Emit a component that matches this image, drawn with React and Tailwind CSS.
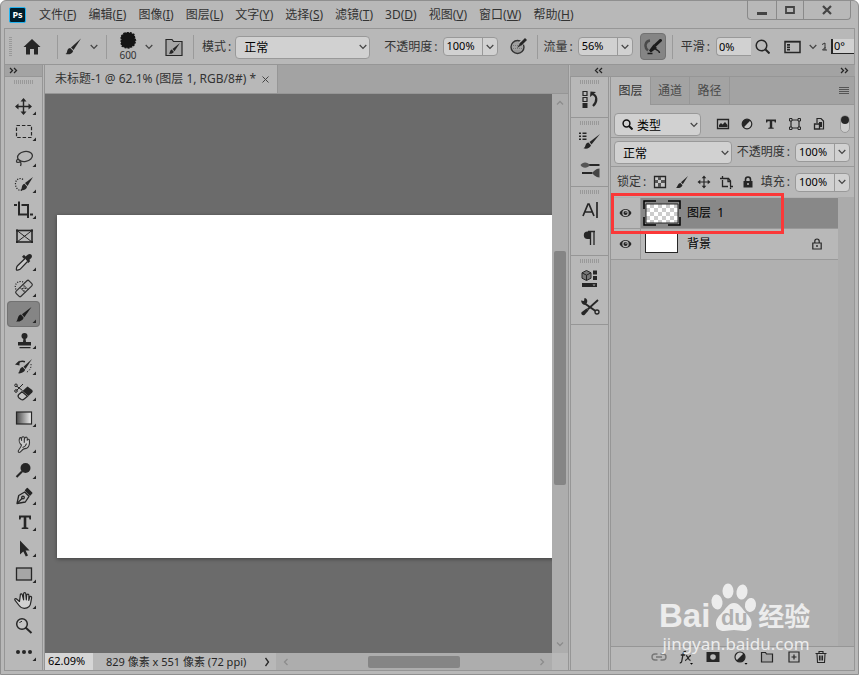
import { useState } from 'react'

const MENUS = [
  ['文件', 'F'],
  ['编辑', 'E'],
  ['图像', 'I'],
  ['图层', 'L'],
  ['文字', 'Y'],
  ['选择', 'S'],
  ['滤镜', 'T'],
  ['3D', 'D'],
  ['视图', 'V'],
  ['窗口', 'W'],
  ['帮助', 'H'],
]

// Every tool is drawn on a 33x26 grid, the size of its button
const TOOLS = [
  {
    name: '移动工具',
    art: (
      <g>
        <path d="M16.5 6.5v14M9.500 13.500h14" stroke="#262626" strokeWidth="1.4" />
        <path d="M16.500 5l3 3.500h-6zM16.500 22l3-3.500h-6zM8 13.500l3.500-3v6zM25 13.500l-3.500-3v6z" fill="#262626" />
      </g>
    ),
  },
  {
    name: '矩形选框工具',
    art: <rect x="9.500" y="6.500" width="15" height="12" fill="none" stroke="#262626" strokeWidth="1.200" strokeDasharray="3.500 1.900" />,
  },
  {
    name: '套索工具',
    art: (
      <g fill="none" stroke="#333" strokeWidth="1.300">
        <ellipse cx="18" cy="11.500" rx="7.500" ry="5" transform="rotate(-10 18 11.5)" />
        <path d="M11 14c-2 1.200-2 3.400 0 3.400s3-1.600 1.400-2.600M12.500 16c1.500 1 2 2.500 1 5" />
      </g>
    ),
  },
  {
    name: '快速选择工具',
    art: (
      <g>
        <path d="M16 8.500c-3-2.500-8 0-7.500 5s4 6.500 7 5.500" fill="none" stroke="#262626" strokeWidth="1.200" strokeDasharray="1.200 1.300" />
        <path d="M26 6l-8 6 2.500 3z" fill="#262626" />
        <path d="M17.500 12.800l2.600 3c-.6 3-3.600 4-6.600 3.200 1.600-.8 1-2.200 1.600-4 .4-1.200 1.400-1.800 2.400-2.200z" fill="#262626" />
      </g>
    ),
  },
  {
    name: '裁剪工具',
    art: <path d="M12 4.500v13h10M7 8h3M14.500 8h6.500v13M23 17.500h3" fill="none" stroke="#262626" strokeWidth="2" />,
  },
  {
    name: '图框工具',
    plain: true,
    art: (
      <g fill="none" stroke="#262626">
        <rect x="10" y="7.500" width="15" height="11.500" strokeWidth="1.600" />
        <path d="M10 7.500l15 11.500M25 7.500L10 19" />
        <path d="M9 6.500h2v2H9zM24 6.500h2v2h-2zM9 18h2v2H9zM24 18h2v2h-2z" fill="#262626" stroke="none" />
      </g>
    ),
  },
  {
    name: '吸管工具',
    art: (
      <g>
        <path d="M18.500 7.500l2.500-2c2.400-1.800 5 .8 3.500 3.200l-2.200 2.300 1 1-2 2-6.300-6.300 2-2z" fill="#262626" />
        <path d="M18 9.500l-7.500 7.300c-.9.900-1.500 3.700-1 4.200s3.200-.3 4-1.200l7-7.300" fill="#c8c8c8" stroke="#262626" strokeWidth="1.200" />
      </g>
    ),
  },
  {
    name: '污点修复画笔工具',
    art: (
      <g>
        <path d="M9 14.500c-2-4 .5-8 4.500-8 2 0 3 .5 4 1.500" fill="none" stroke="#262626" strokeWidth="1.200" strokeDasharray="1.200 1.300" />
        <rect x="8" y="10" width="18" height="7" rx="1.500" fill="#b8b8b8" stroke="#333" strokeWidth="1.200" transform="rotate(-44 17 13.5)" />
        <path d="M13 12.500l5.500 5.500M16 9.500l5.500 5.500" stroke="#333" />
        <path d="M17 11.500v1M15 13.500h1M18 13.500h1M17 15.300v1M16.500 13.500h1" stroke="#333" strokeWidth="1.200" />
      </g>
    ),
  },
  {
    name: '画笔工具',
    art: (
      <g fill="#1c1c1c">
        <path d="M24.500 6l-9.500 7.200 2.300 3z" />
        <path d="M14 13.500l2.700 3.200c-1 2.800-4 4.300-7.700 3.800 1.600-1 1.400-2.800 2.200-4.600.6-1.400 1.600-2.200 2.800-2.400z" />
      </g>
    ),
  },
  {
    name: '仿制图章工具',
    art: (
      <g fill="#262626">
        <circle cx="17.500" cy="9" r="3" />
        <path d="M16.500 11h2l.5 4h5v3.500H11V15h5zM12.500 20h11v1.300h-11z" />
      </g>
    ),
  },
  {
    name: '历史记录画笔工具',
    art: (
      <g>
        <path d="M25 6l-8.500 7.700 2 2.400z" fill="#262626" />
        <path d="M15.700 14l2.500 2.800c-.9 2.500-4 4-7.200 3.500 1.500-1 1.300-2.400 2.100-4.200.6-1.200 1.500-2 2.600-2.100z" fill="#262626" />
        <path d="M8 11.500l4.500-4v5z" fill="#262626" />
        <path d="M11 10c2-1.800 4.500-2 7-1.300" fill="none" stroke="#262626" strokeWidth="1.600" />
        <path d="M24 11c.5 4-1.500 7-5 8.500" fill="none" stroke="#262626" strokeDasharray="1.200 1.600" />
      </g>
    ),
  },
  {
    name: '橡皮擦工具',
    art: (
      <g>
        <path d="M20.500 7.500l4.700 3.500q1.200 1.200 0 2.500l-3.700 3.500-6-5z" fill="#262626" />
        <path d="M15 12.800l-3.200 2.700q-1.500 1.600 0 3.200l2.400 1.800q1.500.8 3-.5l3.300-2.800z" fill="#c4c4c4" stroke="#262626" strokeWidth="1.200" />
        <path d="M9.500 7l6 4.500M16 5L9.500 11.500" stroke="#262626" />
        <circle cx="9" cy="6.300" r="1.300" fill="none" stroke="#262626" />
        <circle cx="9" cy="12" r="1.300" fill="none" stroke="#262626" />
      </g>
    ),
  },
  {
    name: '渐变工具',
    art: (
      <g>
        <defs>
          <linearGradient id="ramp">
            <stop offset="0" stopColor="#4a4a4a" />
            <stop offset="1" stopColor="#f2f2f2" />
          </linearGradient>
        </defs>
        <rect x="9.500" y="7" width="15" height="12" fill="url(#ramp)" stroke="#262626" strokeWidth="1.200" />
      </g>
    ),
  },
  {
    name: '涂抹工具',
    art: (
      <g fill="#c8c8c8" stroke="#333" strokeWidth="1.100" strokeLinejoin="round">
        <path d="M14.500 14c-2-1.500-2.800-4.500-2-6.500.5-1.500 2-1 1.800.5l.3 1.500c-.3-2 .2-4 1.700-3.800 1.300.2 1.200 1.800 1 3 .3-1.500 1-2.800 2.300-2.500 1.200.4.700 2 .6 3 .6-1.200 2-1.500 2.200 0 .4 3.300.4 6-2.400 7.800-1.500.8-2.700.5-3.800 1.200-1.400 1-2.500 3.300-4 3.300-1.500-.2-1-2-.1-3 1.200-1.400 2-2.500 2.400-4.500z" />
        <path d="M15.500 16.500c1.800-.5 3.500-1.800 4-4M17.300 8.700v3" fill="none" />
      </g>
    ),
  },
  {
    name: '减淡工具',
    art: (
      <g>
        <circle cx="18.500" cy="11" r="5" fill="#262626" />
        <path d="M15 14.500l-5.500 5.500" stroke="#262626" strokeWidth="2.200" />
      </g>
    ),
  },
  {
    name: '钢笔工具',
    art: (
      <g fill="none" stroke="#262626" strokeWidth="1.300" strokeLinejoin="round">
        <path d="M10 20.500l1.700-8 6-3.500 4.300 4.300-3.700 5.700z" />
        <path d="M10.500 20l5-5" />
        <circle cx="16" cy="14.500" r="1.300" />
        <path d="M18.500 7.500l1.800-2 4.500 4.500-1.800 2z" fill="#262626" />
      </g>
    ),
  },
  {
    name: '横排文字工具',
    art: <path d="M12 6.500h12v4h-1.500l-.5-2h-2.700v9.800l2 .4v1.300h-6.600v-1.300l2-.4V8.500H14l-.5 2H12z" fill="#262626" />,
  },
  {
    name: '路径选择工具',
    art: <path d="M13 5.500v14l3.300-3 2.500 5 2.200-1.100-2.400-4.900h4z" fill="#262626" />,
  },
  {
    name: '矩形工具',
    art: <rect x="9.500" y="7" width="15" height="12" fill="#a6a6a6" stroke="#262626" strokeWidth="1.300" />,
  },
  {
    name: '抓手工具',
    art: (
      <path
        d="M12.500 14.500l-3.200-2.700c-1.300-.8-2 .5-1.200 1.500l4 5.200c1.400 2 3 2.800 5.200 2.800 4 0 6.200-2 6.500-6l.8-4.500c.2-1.600-1.500-2-2-.5l-.8 3 .1-5c0-1.700-2-1.700-2.200 0l-.4 4.500-.5-6c-.1-1.500-2.200-1.500-2.200 0v6l-1.300-5c-.5-1.500-2.300-1-2 .5z"
        fill="#d2d2d2"
        stroke="#262626"
        strokeWidth="1.200"
        strokeLinejoin="round"
      />
    ),
  },
  {
    name: '缩放工具',
    plain: true,
    art: (
      <g fill="none" stroke="#262626">
        <circle cx="15" cy="11" r="5.300" fill="#c4c4c4" strokeWidth="1.500" />
        <path d="M12.500 10c.5-1 1.300-1.600 2.500-1.700" />
        <path d="M18.500 14.500l6 5.500" strokeWidth="2" />
      </g>
    ),
  },
  {
    name: '编辑工具栏',
    art: (
      <g fill="#262626">
        <circle cx="11" cy="13" r="2" />
        <circle cx="17" cy="13" r="2" />
        <circle cx="23" cy="13" r="2" />
      </g>
    ),
  },
]

// Collapsed panels, 24x24 each
const DOCK = [
  [
    {
      name: '历史记录',
      art: (
        <g>
          <path d="M5 3.500h4v4H5zM5 9.500h4v4H5z" fill="none" stroke="#262626" strokeWidth="1.200" />
          <path d="M4.500 15h5v5h-5zM12 9l.5-5.500 5.500.5z" fill="#262626" />
          <path d="M14 6c5 1 6 7 1 12" fill="none" stroke="#262626" strokeWidth="2.200" />
        </g>
      ),
    },
  ],
  [
    {
      name: '画笔设置',
      art: (
        <g fill="#262626">
          <path d="M1 3.500h2v1.500H1zM4.500 3.500h4v1.500h-4zM1 6.500h2V8H1zM4.500 6.500h4V8h-4zM1 9.500h2V11H1zM4.500 9.500h4V11h-4z" />
          <path d="M22 5l-10.500 8 2 2.500z" />
          <path d="M10.500 13.500l2.500 2.800c-1 3-4.500 4-7.500 3 1.700-.7 1.500-2.300 2.300-3.800.6-1.200 1.600-1.900 2.700-2z" />
        </g>
      ),
    },
    {
      name: '画笔',
      art: (
        <g>
          <path d="M11 8h10.500M4 16h10" stroke="#262626" strokeWidth="2" />
          <path d="M2.500 8C4.500 4.500 9.500 4.500 12 8c-2.500 3.500-7.500 3.500-9.500 0z" fill="#555" />
          <path d="M13.500 16c2-1 4-4.500 8-4.500v9c-4 0-6-3.500-8-4.500z" fill="#444" />
        </g>
      ),
    },
  ],
  [
    {
      name: '字符',
      art: <path d="M5 18L10 6h1l5 12M7 14h7M19 4v16" fill="none" stroke="#262626" strokeWidth="1.700" />,
    },
    {
      name: '段落',
      art: (
        <g>
          <path d="M12 5.500h-2.500a3.700 3.700 0 000 7.400H12z" fill="#262626" />
          <path d="M10 5.500h7M12.500 5v14M16 5v14" stroke="#262626" strokeWidth="1.300" fill="none" />
        </g>
      ),
    },
  ],
  [
    {
      name: '库',
      art: (
        <g>
          <path d="M8.500 3.500l4.500 2.300v5.400l-4.500 2.300L4 11.200V5.800z" fill="#777" stroke="#262626" />
          <path d="M4 5.800l4.500 2.400L13 5.800M8.500 8.200v5" fill="none" stroke="#262626" />
          <path d="M15 3.500h4v4h-4zM15 9h4v4h-4zM4 16h15v4H4z" fill="#262626" />
          <path d="M14.500 17.500h3l-1.500 1.500z" fill="#b8b8b8" />
        </g>
      ),
    },
    {
      name: '工具预设',
      art: (
        <g>
          <path d="M6 8l13 9" stroke="#262626" strokeWidth="2" />
          <path d="M3 5.500l3 .5.500-3c3 .5 3.500 3.500 2 5.500S4 10.500 3 5.500z" fill="#262626" />
          <path d="M20 5L9.500 14.500" stroke="#262626" strokeWidth="1.800" />
          <path d="M8.500 13.500l2 2-4 4.500c-2 1-4-1-3-2.800z" fill="#262626" />
          <circle cx="19" cy="17" r="2" fill="#b8b8b8" stroke="#262626" strokeWidth="1.300" />
        </g>
      ),
    },
  ],
]

function Chevron({ className = '' }) {
  return (
    <svg viewBox="0 0 8 6" className={`w-2 h-1.5 ${className}`}>
      <path d="M.7 1L4 4.500 7.300 1" fill="none" stroke="#444" strokeWidth="1.200" />
    </svg>
  )
}

function Divider() {
  return <div className="w-px h-6 bg-[#9a9a9a] shrink-0" />
}

function Gripper() {
  return (
    <div className="h-[11px] pt-[3px]">
      <svg viewBox="0 0 20 4" className="block mx-auto w-5 h-1">
        <path d="M0 2h20" stroke="#999" strokeWidth="4" strokeDasharray="1 1" />
      </svg>
    </div>
  )
}

function Select({ label, value, className = '', children }) {
  return (
    <div className={`relative ${className}`}>
      {children}
      <select
        aria-label={label}
        defaultValue={value}
        className={`appearance-none w-full h-[23px] pt-0.5 rounded-sm border border-[#999] bg-[#d1d1d1] text-xs text-black outline-none ${children ? 'pl-[22px]' : 'pl-2'}`}
      >
        <option>{value}</option>
      </select>
      <Chevron className="absolute right-[3px] top-2.5 pointer-events-none" />
    </div>
  )
}

function Percent({ id, label, value }) {
  return (
    <div className="flex items-center shrink-0 gap-1">
      <label htmlFor={id} className="text-xs whitespace-nowrap">
        {label}
        <span className="ml-0.5 mr-px">:</span>
      </label>
      <div className="flex h-[19px] border border-[#999] rounded-sm bg-[#d1d1d1]">
        <input id={id} defaultValue={value} className="w-[38px] pl-[3px] text-[11px] text-black bg-transparent outline-none" />
        <button aria-label={`${label}滑块`} className="w-[15px] border-l border-[#999] flex items-center justify-center">
          <Chevron />
        </button>
      </div>
    </div>
  )
}

function MenuBar() {
  return (
    <header className="flex justify-between h-[27px] shrink-0 pl-2 pr-[7px]">
      <div className="flex items-center">
        <span className="w-[17px] h-4 rounded-xs border border-[#22b4f2] bg-[#001e2c] text-white text-[9px] leading-none font-bold flex items-center justify-center">
          Ps
        </span>
        <nav className="flex gap-3 ml-[13px] text-xs text-[#333] whitespace-nowrap">
          {MENUS.map(([text, key]) => (
            <button key={key}>
              {text}(<u>{key}</u>)
            </button>
          ))}
        </nav>
      </div>
      <div className="flex h-5 -mt-px border border-t-0 border-[#8a8a8a] rounded-b-sm">
        <button aria-label="最小化" className="w-7 flex justify-center items-center">
          <svg viewBox="0 0 12 12" className="w-3 h-3"><path d="M1 8h10v3H1z" fill="#444" /></svg>
        </button>
        <button aria-label="最大化" className="w-7 flex justify-center items-center border-x border-[#8a8a8a]">
          <svg viewBox="0 0 12 12" className="w-3 h-3"><path d="M2 3h8v6H2z" fill="none" stroke="#444" strokeWidth="1.800" /></svg>
        </button>
        <button aria-label="关闭" className="w-[46px] flex justify-center items-center">
          <svg viewBox="0 0 12 12" className="w-3 h-3"><path d="M2 2l8 8M10 2l-8 8" stroke="#444" strokeWidth="2.200" /></svg>
        </button>
      </div>
    </header>
  )
}

function OptionsBar() {
  return (
    <div className="flex items-center h-[35px] flex-1 shrink-0 pl-1 text-[#333]">
      <svg viewBox="0 0 3 20" className="w-[3px] h-5 shrink-0">
        <path d="M1.500 0v20" stroke="#999" strokeWidth="3" strokeDasharray="1 1" />
      </svg>
      <button aria-label="主页" className="ml-[11px] mr-4 shrink-0">
        <svg viewBox="0 0 18 16" className="w-[18px] h-4">
          <path d="M9 0l8.500 8H15v7.500h-4V10H7v5.500H3V8H.5z" fill="#262626" />
        </svg>
      </button>
      <Divider />
      <button aria-label="画笔预设" className="ml-[7px] mr-2 flex items-center gap-2 shrink-0">
        <svg viewBox="0 0 17 17" className="w-[17px] h-[17px]">
          <path d="M16 .5L6 9.500l2.500 2.500z" fill="#262626" />
          <path d="M5.200 10l3 3C7.200 15.800 4 17 .5 16c1.800-.8 1.300-2.300 2-4 .5-1.200 1.500-2 2.700-2z" fill="#262626" />
        </svg>
        <Chevron />
      </button>
      <Divider />
      <button aria-label="画笔大小" className="ml-3 mr-3 flex items-center gap-2 shrink-0">
        <span className="flex flex-col items-center">
          <svg viewBox="0 0 18 17" className="w-[18px] h-[17px]">
            <path d="M5 1.500l3-1 4 .5 3 1.500.5 3 1 3-1 4-2.500 2-3 1.500-4-.5-3-1.500-1-3.500.5-3-.5-3z" fill="#141414" stroke="#141414" strokeWidth="1.500" strokeDasharray="2 1" />
          </svg>
          <span className="text-[10px] leading-3">600</span>
        </span>
        <Chevron />
      </button>
      <button aria-label="画笔设置面板" className="mr-2.5 shrink-0">
        <svg viewBox="0 0 18 18" className="w-[18px] h-[18px]">
          <path d="M1 1.500h6l1.500 2H17v14H1z" fill="#a6a6a6" stroke="#262626" strokeWidth="1.200" />
          <path d="M15 5l-7.500 6 2 2.200z" fill="#262626" />
          <path d="M6.800 11.500l2 2.200c-.8 1.800-2.800 2.500-4.800 2 1-.8.900-3.800 2.800-4.200z" fill="#262626" />
        </svg>
      </button>
      <Divider />
      <span className="ml-2 mr-1 text-xs whitespace-nowrap">模式<span className="ml-0.5">:</span></span>
      <Select label="模式" value="正常" className="flex-1 min-w-20 max-w-[137px] mr-3.5" />
      <Percent id="brush-opacity" label="不透明度" value="100%" />
      <button aria-label="压力控制不透明度" className="ml-3 mr-2.5 shrink-0">
        <svg viewBox="0 0 17 17" className="w-[17px] h-[17px]">
          <circle cx="7.500" cy="9" r="6.500" fill="#a0a0a0" stroke="#333" strokeWidth="1.400" />
          <path d="M3 7.500h8M3 10.500h9M4.500 13h6" stroke="#777" strokeDasharray="1 1" />
          <path d="M16.500.5l-6 5.500" stroke="#b8b8b8" strokeWidth="5" />
          <path d="M16 1l-5.500 5.500" stroke="#262626" strokeWidth="2.800" />
          <path d="M10.500 4.500L7 10l5.500-3.500z" fill="#262626" />
        </svg>
      </button>
      <Divider />
      <div className="ml-1.5 mr-[7px] shrink-0">
        <Percent id="brush-flow" label="流量" value="56%" />
      </div>
      <button aria-label="启用喷枪" className="w-[26px] h-[27px] mr-1.5 rounded-sm border border-[#727272] bg-[#858585] shrink-0 flex items-center justify-center">
        <svg viewBox="0 0 18 16" className="w-[18px] h-4">
          <path d="M6 1.500C1 2 0 8.500 4 11.500" fill="none" stroke="#4a4a4a" strokeWidth="2.500" />
          <path d="M17.500.5l-7 6.500" stroke="#1c1c1c" strokeWidth="3" />
          <path d="M9.500 5.500L5 11.500l1.800 2L13 9z" fill="#1c1c1c" />
          <path d="M11 9.500c2 2.500 4.500 1.500 4.500 4.500M3.500 14.500h5" fill="none" stroke="#1c1c1c" strokeWidth="1.500" />
        </svg>
      </button>
      <Divider />
      <label htmlFor="smooth" className="ml-2 mr-1.5 text-xs whitespace-nowrap">平滑<span className="ml-0.5">:</span></label>
      <input id="smooth" defaultValue="0%" className="w-[35px] h-[19px] pl-0.5 mr-1 shrink-0 border border-r-0 border-[#999] rounded-l-sm bg-[#d1d1d1] text-[11px] text-black outline-none" />
      <button aria-label="搜索" className="mr-3.5 shrink-0">
        <svg viewBox="0 0 15 15" className="w-[15px] h-[15px]">
          <circle cx="6.500" cy="6.500" r="5.300" fill="none" stroke="#262626" strokeWidth="1.500" />
          <path d="M10.500 10.500l4 4" stroke="#262626" strokeWidth="2" />
        </svg>
      </button>
      <button aria-label="选择工作区" className="flex items-center gap-2 mr-1 shrink-0">
        <svg viewBox="0 0 17 14" className="w-[17px] h-3.5">
          <path d="M1 1.500h15v11H1z" fill="none" stroke="#262626" strokeWidth="1.500" />
          <path d="M3 4h3v1.800H3zM3 6.500h3v1.800H3zM3 9h3v1.500H3zM1 1h15v1.500H1z" fill="#262626" />
        </svg>
        <Chevron />
      </button>
      <svg viewBox="0 0 6 9" className="w-1.5 h-[9px] mr-1 shrink-0">
        <path d="M1 2.500l3-1.500v4.500L1.500 8H6M4 5v3" fill="none" stroke="#333" />
      </svg>
      <input aria-label="画笔角度" defaultValue="0°" className="w-[23px] h-[15px] pl-px shrink-0 border-l-2 border-b border-[#262626] bg-[#d1d1d1] text-[11px] text-black outline-none" />
    </div>
  )
}

function Toolbar({ active, onPick }) {
  return (
    <aside className="w-[39px] shrink-0 flex flex-col border-x border-[#969696]">
      <button aria-label="展开工具栏" className="h-3 shrink-0 bg-[#a3a3a3] border-b border-[#969696] pl-1 flex items-center">
        <svg viewBox="0 0 9 7" className="w-[9px] h-[7px]"><path d="M1 1l2.500 2.500L1 6M5 1l2.500 2.500L5 6" fill="none" stroke="#262626" strokeWidth="1.300" /></svg>
      </button>
      <div className="h-4 shrink-0">
        <Gripper />
      </div>
      {TOOLS.map((tool) => (
        <button
          key={tool.name}
          aria-label={tool.name}
          onClick={() => onPick(tool.name)}
          className={`h-[26px] shrink-0 mx-0.5 rounded-sm ${active === tool.name ? 'bg-[#858585] outline outline-[#727272] -outline-offset-1' : ''}`}
        >
          <svg viewBox="0 0 33 26" className="w-[33px] h-[26px] block">
            {tool.art}
            {!tool.plain && <path d="M29 18.500V22h-3.500z" fill="#262626" />}
          </svg>
        </button>
      ))}
    </aside>
  )
}

function Document() {
  return (
    <main className="flex-1 min-w-0 flex flex-col border-x border-[#969696]">
      <div className="flex h-[29px] shrink-0 bg-[#a3a3a3] border-b border-[#969696]">
        <div className="flex items-center gap-1.5 pl-2.5 pr-2 bg-[#b8b8b8] border-r border-[#969696] text-xs text-[#333] whitespace-nowrap">
          未标题-1 @ 62.1% (图层 1, RGB/8#) *
          <button aria-label="关闭文档">
            <svg viewBox="0 0 7 7" className="w-[7px] h-[7px]"><path d="M.5.5l6 6M6.500.5l-6 6" stroke="#444" /></svg>
          </button>
        </div>
      </div>
      <div className="flex flex-1 min-h-0">
        <div className="flex-1 min-w-0 overflow-hidden bg-[#6b6b6b] pl-3 pt-[121px]">
          <div className="w-[515px] h-[343px] bg-white shadow-[0_1px_4px_rgba(0,0,0,0.4)]" />
        </div>
        <div className="w-4 shrink-0 bg-[#adadad] flex flex-col items-center justify-between py-1.5">
          <svg viewBox="0 0 8 6" className="w-2 h-1.5"><path d="M1 4.500L4 1.500l3 3" fill="none" stroke="#8c8c8c" strokeWidth="1.300" /></svg>
          <div className="flex-1 w-3 pt-[145px]">
            <div className="h-[234px] rounded-xs bg-[#858585]" />
          </div>
          <svg viewBox="0 0 8 6" className="w-2 h-1.5"><path d="M1 1.500l3 3 3-3" fill="none" stroke="#8c8c8c" strokeWidth="1.300" /></svg>
        </div>
      </div>
      <div className="flex h-[17px] shrink-0 text-[#262626]">
        <input aria-label="缩放比例" defaultValue="62.09%" className="w-12 pl-[3px] bg-[#d6d6d6] text-[11px] text-black outline-none" />
        <span className="pl-[13px] text-[11px] leading-[17px] whitespace-nowrap">829 像素 x 551 像素 (72 ppi)</span>
        <button aria-label="文档信息" className="pl-[18px] pr-1.5 flex items-center">
          <svg viewBox="0 0 6 10" className="w-1.5 h-2.5"><path d="M1.500 1L4.500 5l-3 4" fill="none" stroke="#262626" strokeWidth="1.300" /></svg>
        </button>
        <div className="flex-1 bg-[#adadad] flex items-center justify-between px-[7px]">
          <svg viewBox="0 0 6 8" className="w-1.5 h-2"><path d="M4.500 1l-3 3 3 3" fill="none" stroke="#8c8c8c" strokeWidth="1.300" /></svg>
          <div className="w-[92px] h-3 rounded-xs bg-[#858585]" />
          <svg viewBox="0 0 6 8" className="w-1.5 h-2"><path d="M1.500 1l3 3-3 3" fill="none" stroke="#8c8c8c" strokeWidth="1.300" /></svg>
        </div>
        <div className="w-4 shrink-0" />
      </div>
    </main>
  )
}

function Dock() {
  return (
    <div className="w-[39px] shrink-0 border-x border-[#969696]">
      {DOCK.map((group) => (
        <div key={group[0].name} className="pb-px border-b border-[#969696]">
          <Gripper />
          {group.map((item) => (
            <button key={item.name} aria-label={item.name} className="flex w-full h-7 items-start justify-center">
              <svg viewBox="0 0 24 24" className="w-6 h-6">{item.art}</svg>
            </button>
          ))}
        </div>
      ))}
    </div>
  )
}

function Eye() {
  return (
    <svg viewBox="0 0 13 10" className="w-[13px] h-2.5">
      <path d="M.5 5C3-.2 10-.2 12.500 5 10 10.200 3 10.200.5 5z" fill="#262626" />
      <circle cx="6.500" cy="5" r="3.200" fill="#b8b8b8" />
      <circle cx="6.500" cy="5" r="2" fill="#262626" />
      <circle cx="7" cy="4.300" r=".7" fill="#b8b8b8" />
    </svg>
  )
}

const FILTERS = [
  ['像素图层', <g key="a"><path d="M1.500 2.500h11v9h-11z" fill="none" stroke="#262626" strokeWidth="1.300" /><path d="M3 10V8l2-2 1.500 1.500L9 5l2.500 3v2z" fill="#262626" /></g>],
  ['调整图层', <g key="b"><circle cx="7" cy="7" r="4.800" fill="#c4c4c4" stroke="#262626" strokeWidth="1.200" /><path d="M3.600 10.400a4.800 4.800 0 010-6.800 4.800 4.800 0 016.800 0z" fill="#262626" /></g>],
  ['文字图层', <path key="c" d="M2 2.500h10v3h-1.200l-.4-1.300H8.200v6.300l1.500.3v1H4.300v-1l1.500-.3V4.200H3.600L3.200 5.500H2z" fill="#262626" />],
  ['形状图层', <g key="d" fill="none" stroke="#262626"><path d="M3 3h8v8H3z" strokeWidth="1.200" /><path d="M1.500 1.500h2.500V4H1.500zM10 1.500h2.500V4H10zM1.500 10h2.500v2.500H1.500zM10 10h2.500v2.500H10z" fill="#b8b8b8" /></g>],
  ['智能对象', <g key="e"><path d="M5 6V1.500h4l2.500 2.500v8H8" fill="none" stroke="#262626" strokeWidth="1.200" /><path d="M2.500 7h5v5h-5z" fill="none" stroke="#262626" strokeWidth="1.300" /><path d="M7 5h3v5H8V7H7z" fill="#262626" /></g>],
]

const LOCKS = [
  ['锁定透明像素', <g key="a"><path d="M1.500 1.500h11v11h-11z" fill="#c8c8c8" stroke="#262626" strokeWidth="1.300" /><path d="M5 2h3v3H5zM2 5h3v3H2zM8 5h4v3H8zM5 8h3v4H5z" fill="#555" /></g>],
  ['锁定图像像素', <path key="b" d="M13 1L6 7.200l1.800 2zM5.500 8l2 2.200c-.8 2.200-3.500 3.300-6.500 2.800 1.800-1 1.500-4.600 4.500-5z" fill="#262626" />],
  ['锁定位置', <g key="c"><path d="M7 2v10M2 7h10" stroke="#262626" strokeWidth="1.200" /><path d="M7 .5l2.300 2.800H4.700zM7 13.500l2.300-2.800H4.700zM.5 7l2.800-2.300v4.600zM13.500 7l-2.800-2.300v4.600z" fill="#262626" /></g>],
  ['防止在画板内外自动嵌套', <g key="d" fill="none" stroke="#262626" strokeWidth="1.300"><path d="M3.500 1v2M1 3.500h8.500L11.500 6v5M3.500 5v6.500H9M11.500 12.500V14M11 11.500h3" /><path d="M9 3v3.500h3" /></g>],
  ['锁定全部', <g key="e"><path d="M4.500 6V4.500a2.500 2.500 0 015 0V6" fill="none" stroke="#262626" strokeWidth="1.600" /><path d="M2.500 6h9v6.500h-9z" fill="#262626" /><circle cx="7" cy="9" r="1" fill="#b8b8b8" /></g>],
]

const ACTIONS = [
  ['链接图层', <path key="a" d="M6.500 5H4a3 3 0 000 6h2.500M9.500 5H12a3 3 0 010 6H9.500M5 8h6" fill="none" stroke="#777" strokeWidth="1.400" />],
  ['图层样式', <g key="b"><path d="M8 2.500c-2-.8-2.600 1-3 3L3.800 12c-.3 1.500-1 2-2 1.600M2.800 6h4.400M8 6.500c2 0 2 5 4.500 5M13 6.500c-2.500 0-3.500 5-6 5" fill="none" stroke="#262626" strokeWidth="1.300" /><path d="M12 14h3l-1.500 1.700z" fill="#000" /></g>],
  ['图层蒙版', <g key="c"><path d="M1.500 3h13v10h-13z" fill="#262626" /><circle cx="8" cy="8" r="2.800" fill="#b8b8b8" /></g>],
  ['新建调整图层', <g key="d"><circle cx="8" cy="8" r="5" fill="#c4c4c4" stroke="#262626" strokeWidth="1.200" /><path d="M11.500 4.500a5 5 0 010 7 5 5 0 01-7 0z" fill="#262626" /><path d="M12.500 14h3L14 15.700z" fill="#000" /></g>],
  ['新建组', <path key="e" d="M2.500 3.500h4l1 1.500h6v8h-11z" fill="#a6a6a6" stroke="#262626" strokeWidth="1.200" />],
  ['新建图层', <path key="f" d="M3 3h10v10H3zM8 5.500v5M5.500 8h5" fill="none" stroke="#262626" strokeWidth="1.200" />],
  ['删除图层', <path key="g" d="M4 5l.5 8.500h7L12 5M2.500 4.500h11M6 4V2.500h4V4M6.500 6.500v5M8 6.500v5M9.500 6.500v5" fill="none" stroke="#262626" strokeWidth="1.100" />],
]

function LayersPanel() {
  return (
    <section className="flex-1 min-w-0 flex flex-col border-x border-[#969696] text-[#333]">
      <div className="flex h-7 shrink-0 text-xs">
        <button className="w-[39px]">图层</button>
        <button className="w-10 bg-[#a3a3a3] border border-t-0 border-[#969696] text-[#4a4a4a]">通道</button>
        <button className="w-10 bg-[#a3a3a3] border-b border-r border-[#969696] text-[#4a4a4a]">路径</button>
        <div className="flex-1 flex items-center justify-end pr-[5px] bg-[#a3a3a3] border-b border-[#969696]">
          <button aria-label="面板菜单">
            <svg viewBox="0 0 10 8" className="w-2.5 h-2" shapeRendering="crispEdges"><path d="M0 .5h10M0 2.500h10M0 4.500h10M0 6.500h10" stroke="#555" /></svg>
          </button>
        </div>
      </div>

      <div className="flex items-center h-[33px] pt-1.5 pl-[3px] pr-1 shrink-0 border-b border-[#999]">
        <Select label="图层过滤" value="类型" className="w-[87px]">
          <svg viewBox="0 0 11 11" className="absolute left-2 top-[7px] w-[11px] h-[11px] pointer-events-none">
            <circle cx="4.500" cy="4.500" r="3.400" fill="none" stroke="#111" strokeWidth="1.500" />
            <path d="M7 7l3.500 3.500" stroke="#111" strokeWidth="2" />
          </svg>
        </Select>
        <div className="flex gap-2.5 ml-[15px]">
          {FILTERS.map(([name, art]) => (
            <button key={name} aria-label={name}>
              <svg viewBox="0 0 14 14" className="w-3.5 h-3.5">{art}</svg>
            </button>
          ))}
        </div>
        <button aria-label="打开或关闭图层过滤" className="ml-auto w-2.5 h-[18px] flex items-start rounded-full bg-[#cdcdcd] border border-[#999]">
          <span className="w-2 h-2 rounded-full bg-[#262626]" />
        </button>
      </div>

      <div className="flex items-center justify-between h-[29px] pl-[3px] pr-1 shrink-0 border-b border-[#999]">
        <Select label="混合模式" value="正常" className="w-[118px]" />
        <Percent id="layer-opacity" label="不透明度" value="100%" />
      </div>

      <div className="flex items-center justify-between h-[30px] pl-1.5 pr-1 shrink-0">
        <span className="text-xs whitespace-nowrap">锁定<span className="ml-0.5">:</span></span>
        <div className="flex gap-2">
          {LOCKS.map(([name, art]) => (
            <button key={name} aria-label={name}>
              <svg viewBox="0 0 14 14" className="w-3.5 h-3.5">{art}</svg>
            </button>
          ))}
        </div>
        <Percent id="layer-fill" label="填充" value="100%" />
      </div>

      <div className="relative flex flex-1 min-h-0 bg-[#b0b0b0]">
        <ul className="flex-1 text-xs text-black pt-px">
          <li className="flex h-[31px] bg-[#b8b8b8] border-b border-[#999]">
            <button aria-label="隐藏图层 1" className="w-[30px] flex items-center justify-center border-r border-[#999]"><Eye /></button>
            <div className="flex-1 flex items-center gap-1.5 pl-0.5 bg-[#888]">
              <svg viewBox="0 0 38 26" className="w-[38px] h-[26px]">
                <defs>
                  <pattern id="checker" x="3" y="4" width="8" height="8" patternUnits="userSpaceOnUse">
                    <path d="M0 0h8v8H0z" fill="#fff" />
                    <path d="M4 0h4v4H4zM0 4h4v4H0z" fill="#ccc" />
                  </pattern>
                </defs>
                <path d="M3 4h32v19H3z" fill="url(#checker)" stroke="#262626" />
                <path d="M1 9V1h12M25 1h12v8M37 17v8H25M13 25H1v-8" fill="none" stroke="#000" strokeWidth="1.500" />
              </svg>
              图层&nbsp; 1
            </div>
          </li>
          <li className="flex h-[31px] bg-[#b8b8b8] border-b border-[#999]">
            <button aria-label="隐藏背景" className="w-[30px] flex items-center justify-center border-r border-[#999]"><Eye /></button>
            <div className="flex-1 flex items-center pl-1 pr-4">
              <span className="w-[33px] h-[22px] mr-[9px] mb-1 bg-white border border-[#262626]" />
              背景
              <svg viewBox="0 0 10 12" className="w-2.5 h-3 ml-auto">
                <path d="M.8 5h8.400v6H.8zM2.800 5V3.200a2.200 2.200 0 014.400 0V5" fill="none" stroke="#262626" strokeWidth="1.200" />
                <circle cx="5" cy="8" r=".9" fill="#262626" />
              </svg>
            </div>
          </li>
        </ul>
        <div className="w-4 bg-[#ababab]" />
        <div className="absolute left-0 -top-1 w-[173px] h-[41px] border-3 border-[#fb3838] pointer-events-none" />
      </div>

      <div className="flex items-start justify-center gap-[11px] h-6 pt-0.5 shrink-0 pl-[14px] border-t border-[#969696]">
        {ACTIONS.map(([name, art]) => (
          <button key={name} aria-label={name}>
            <svg viewBox="0 0 16 16" className="w-4 h-4">{art}</svg>
          </button>
        ))}
      </div>
    </section>
  )
}

function Watermark() {
  return (
    <div className="absolute right-[45px] bottom-[18px] w-[154px] text-[#ececec] pointer-events-none">
      <div className="flex items-end h-[50px]">
        <span className="text-[33px] leading-8 font-bold font-['Liberation_Sans',sans-serif]">Bai</span>
        <div className="relative w-12 h-[50px]">
          <svg viewBox="0 0 48 50" className="w-12 h-[50px]">
            <g fill="#ececec">
              <ellipse cx="7" cy="20" rx="5.500" ry="7.500" transform="rotate(-8 7 20)" />
              <ellipse cx="18" cy="9" rx="5.500" ry="7.500" />
              <ellipse cx="32" cy="10" rx="5.500" ry="7.500" transform="rotate(10 32 10)" />
              <ellipse cx="40.500" cy="23" rx="5.500" ry="7" transform="rotate(10 40.5 23)" />
              <path d="M24 21c6 0 8 6 13 11 7 7 6 17-3 17-4 0-6-1-10-1s-6 1-10 1c-9 0-11-10-3-17 5-5 7-11 13-11z" />
            </g>
          </svg>
          <span className="absolute inset-x-0 bottom-1 text-center text-[22px] leading-5 font-bold text-[#b0b0b0] font-['Liberation_Sans',sans-serif]">du</span>
        </div>
        <span className="text-[26px] leading-8 font-bold">经验</span>
      </div>
      <div className="text-[17px] leading-6 text-center whitespace-nowrap">jingyan.baidu.com</div>
    </div>
  )
}

export default function App() {
  const [tool, setTool] = useState('画笔工具')

  return (
    <div className="relative min-h-screen flex flex-col rounded-t-md border border-[#8f8f8f] bg-[#b8b8b8] pb-[3px] font-['Noto_Sans','Noto_Sans_CJK_SC',sans-serif]">
      <MenuBar />
      <div className="flex flex-col flex-1 mx-[3px] border-b border-[#969696]">
        <div className="flex h-[37px] shrink-0 border-t border-x border-b border-[#969696]">
          <OptionsBar />
        </div>
        <div className="flex flex-1 gap-px">
          <Toolbar active={tool} onPick={setTool} />
          <Document />
          <div className="w-[285px] shrink-0 flex flex-col">
            <div className="flex h-3 shrink-0 items-center justify-between pl-6 pr-1.5 bg-[#a3a3a3] border-b border-[#969696]">
              <button aria-label="展开面板" className="flex">
                <svg viewBox="0 0 9 7" className="w-[9px] h-[7px]"><path d="M4 1L1.500 3.500 4 6M8 1L5.500 3.500 8 6" fill="none" stroke="#262626" strokeWidth="1.300" /></svg>
              </button>
              <button aria-label="折叠为图标" className="flex">
                <svg viewBox="0 0 9 7" className="w-[9px] h-[7px]"><path d="M1 1l2.500 2.500L1 6M5 1l2.500 2.500L5 6" fill="none" stroke="#262626" strokeWidth="1.300" /></svg>
              </button>
            </div>
            <div className="flex flex-1 gap-px">
              <Dock />
              <LayersPanel />
            </div>
          </div>
        </div>
      </div>
      <Watermark />
    </div>
  )
}
